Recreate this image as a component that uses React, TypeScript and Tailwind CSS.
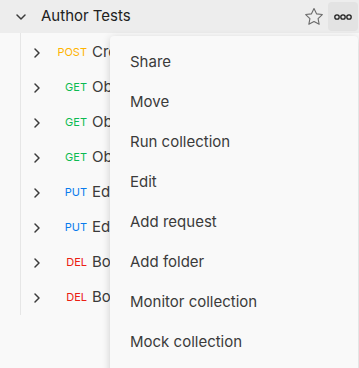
import React from "react";

const rows = [
  { m: "POST", c: "text-[#ffb400]", name: "Create author" },
  { m: "GET", c: "text-[#0cbb52]", name: "Obtain authors" },
  { m: "GET", c: "text-[#0cbb52]", name: "Obtain author" },
  { m: "GET", c: "text-[#0cbb52]", name: "Obtain books" },
  { m: "PUT", c: "text-[#097bed]", name: "Edit author" },
  { m: "PUT", c: "text-[#097bed]", name: "Edit book" },
  { m: "DEL", c: "text-[#eb2013]", name: "Borrar author" },
  { m: "DEL", c: "text-[#eb2013]", name: "Borrar book" },
];

const items = [
  "Share",
  "Move",
  "Run collection",
  "Edit",
  "Add request",
  "Add folder",
  "Monitor collection",
  "Mock collection",
];

function ChevronRight() {
  return (
    <svg width="16" height="16" viewBox="0 0 16 16" fill="none">
      <path d="M6 4l4 4-4 4" stroke="#3b3b3b" strokeWidth="1.5" strokeLinecap="round" strokeLinejoin="round" />
    </svg>
  );
}

export default function App() {
  return (
    <div
      className="relative w-[359px] h-[368px] overflow-hidden bg-[#f9f9f9]"
      style={{ fontFamily: "Inter, 'Noto Sans', sans-serif" }}
    >
      <div className="h-[33px] bg-[#ededed] flex items-center">
        <div className="w-[41px] flex justify-center">
          <svg width="16" height="16" viewBox="0 0 16 16" fill="none">
            <path d="M4 6l4 4 4-4" stroke="#3b3b3b" strokeWidth="1.5" strokeLinecap="round" strokeLinejoin="round" />
          </svg>
        </div>
        <span className="text-[15px] text-[#212121]">Author Tests</span>
        <div className="flex-1" />
        <svg width="22" height="22" viewBox="0 0 24 24" fill="none" className="mr-[3px]">
          <path
            d="M12 2.8l2.75 5.75 6.3.8-4.6 4.35 1.2 6.25L12 16.9l-5.65 3.05 1.2-6.25-4.6-4.35 6.3-.8z"
            stroke="#6b6b6b"
            strokeWidth="1.2"
            strokeLinejoin="round"
          />
        </svg>
        <div className="w-[30px] h-[29px] mr-[1px] rounded-[4px] bg-[#e3e3e3] flex items-center justify-center">
          <svg width="20" height="8" viewBox="0 0 20 8" fill="none">
            <circle cx="4" cy="4" r="2.2" stroke="#212121" strokeWidth="1.3" />
            <circle cx="10" cy="4" r="2.2" stroke="#212121" strokeWidth="1.3" />
            <circle cx="16" cy="4" r="2.2" stroke="#212121" strokeWidth="1.3" />
          </svg>
        </div>
      </div>
      <div className="ml-[20px] w-[90px] overflow-hidden border-l border-[#e6e6e6] pt-[2px]">
        {rows.map((r, i) => (
          <div key={i} className="h-[35px] flex items-center">
            <div className="ml-[8px] w-[16px] shrink-0 flex items-center">
              <ChevronRight />
            </div>
            <span className={`w-[42px] shrink-0 text-right text-[11px] ${r.c}`}>{r.m}</span>
            <span className="ml-[5px] text-[15px] text-[#3b3b3b] whitespace-nowrap">{r.name}</span>
          </div>
        ))}
      </div>
      <div className="absolute left-[110px] top-[36px] w-[248px] h-[360px] rounded-[4px] bg-[#f9f9f9] shadow-[0_2px_8px_rgba(0,0,0,0.18)] pt-[6px]">
        {items.map((t) => (
          <div key={t} className="h-[40px] flex items-center pl-[20px] text-[15px] text-[#3b3b3b]">
            {t}
          </div>
        ))}
      </div>
    </div>
  );
}
